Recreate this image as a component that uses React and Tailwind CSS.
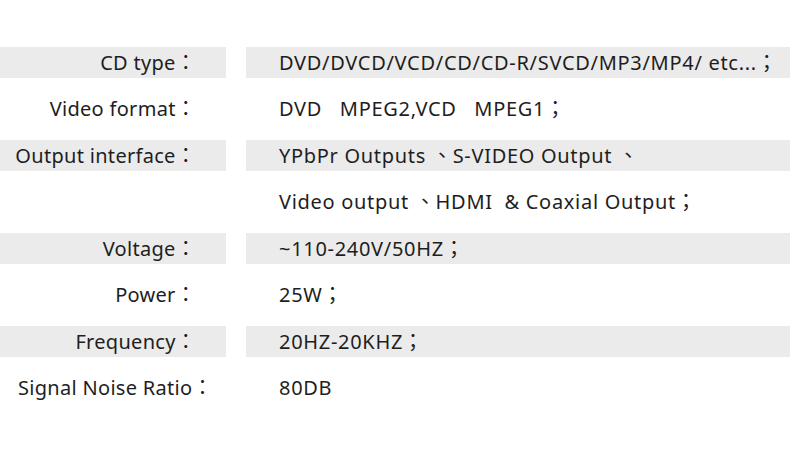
import React from 'react';

const rows = [
  { label: 'CD type：', value: 'DVD/DVCD/VCD/CD/CD-R/SVCD/MP3/MP4/ etc...；', band: true },
  { label: 'Video format：', value: 'DVD\u00a0\u00a0\u00a0MPEG2,VCD\u00a0\u00a0\u00a0MPEG1；', band: false },
  { label: 'Output interface：', value: 'YPbPr Outputs 、S-VIDEO Output 、', band: true },
  { label: '', value: 'Video output 、HDMI\u00a0\u00a0& Coaxial Output；', band: false },
  { label: 'Voltage：', value: '~110-240V/50HZ；', band: true },
  { label: 'Power：', value: '25W；', band: false },
  { label: 'Frequency：', value: '20HZ-20KHZ；', band: true },
  { label: 'Signal Noise Ratio：', value: '80DB', band: false, left: true },
];

export default function App() {
  return (
    <div
      className="w-[790px] h-[450px] bg-white text-[#1e1e1e] pt-[47px] flex flex-col gap-[15.5px] overflow-hidden"
      style={{ fontFamily: '"Noto Sans", "Noto Sans CJK TC", sans-serif' }}
    >
      {rows.map((r, i) => (
        <div key={i} className="flex h-[31px] gap-[20px] text-[20px] leading-none">
          <div
            className={`w-[226px] shrink-0 flex items-center tracking-[0.3px] ${r.band ? 'bg-[#ebebeb]' : ''} ${
              r.left ? 'justify-start pl-[18px]' : 'justify-end pr-[30px]'
            }`}
          >
            <span className="whitespace-nowrap">{r.label}</span>
          </div>
          <div className={`flex-1 flex items-center pl-[33px] tracking-[0.7px] ${r.band ? 'bg-[#ebebeb]' : ''}`}>
            <span className="whitespace-nowrap">{r.value}</span>
          </div>
        </div>
      ))}
    </div>
  );
}
